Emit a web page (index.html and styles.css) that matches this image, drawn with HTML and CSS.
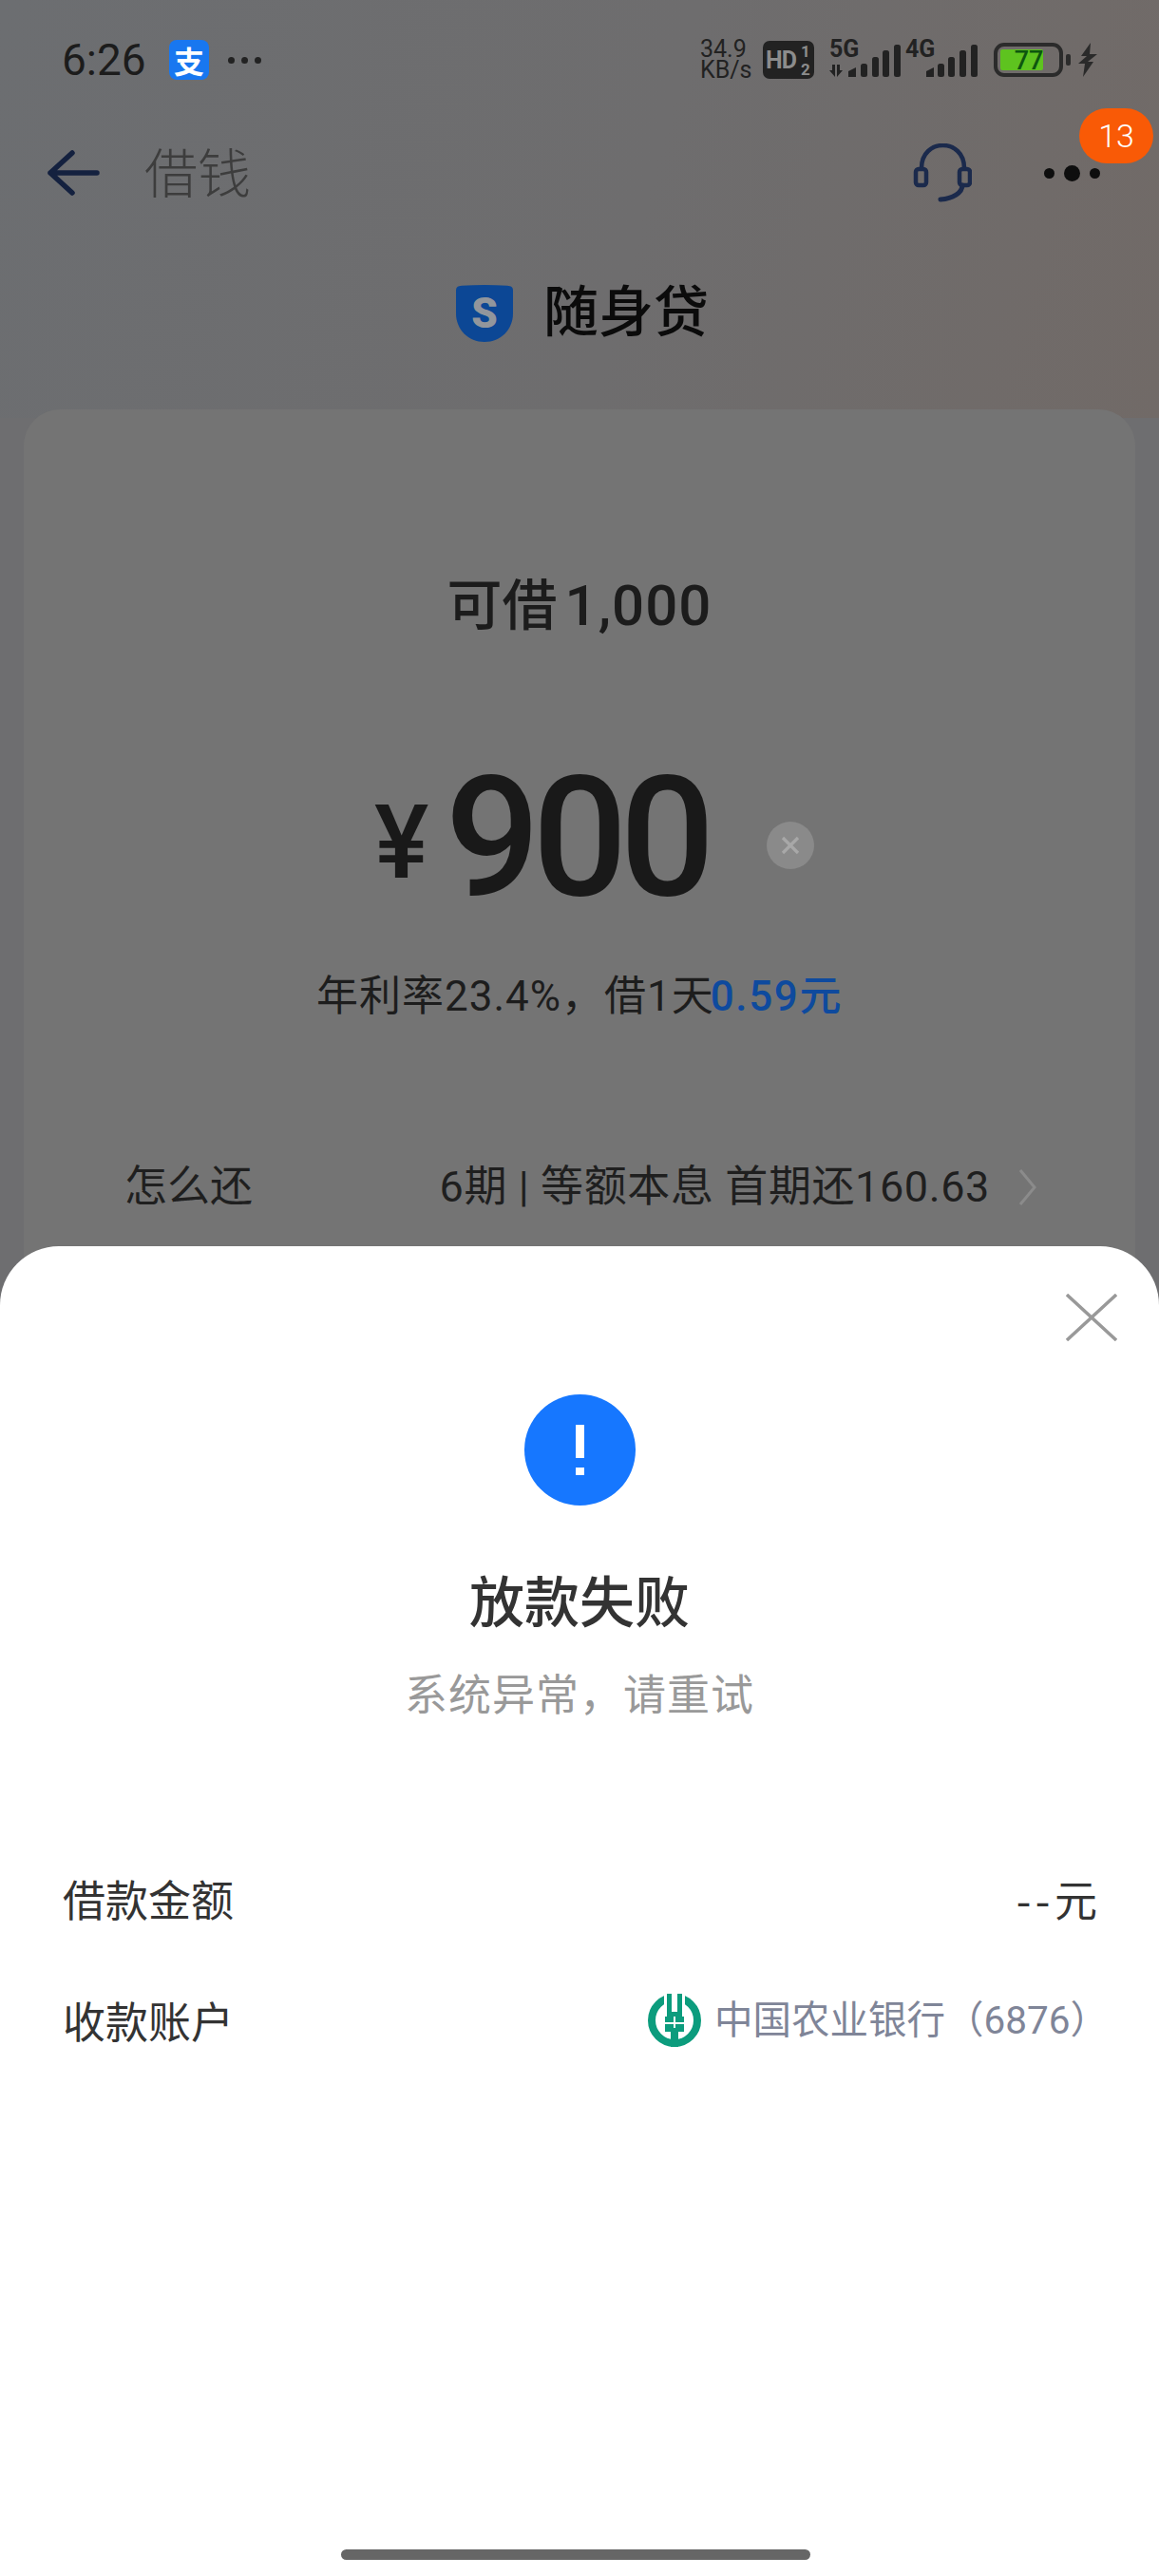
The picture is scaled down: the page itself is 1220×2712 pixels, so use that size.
FILE: index.html
```html
<!DOCTYPE html>
<html lang="zh-CN">
<head>
<meta charset="utf-8">
<title>借钱</title>
<link rel="stylesheet" href="styles.css">
</head>
<body>
<div class="page">
  <header class="status">
    <div class="status-left">
      <span class="time">6:26</span>
      <span class="alipay">支</span>
      <span class="more"><i></i><i></i><i></i></span>
    </div>
    <div class="status-right">
      <span class="net"><span class="net-line">34.9</span><span class="net-line">KB/s</span></span>
      <svg class="hd" width="54" height="40" viewBox="0 0 54 40">
        <rect width="54" height="40" rx="7" fill="#222"/>
        <text x="3" y="29" class="hd-t">HD</text>
        <text x="40" y="17" class="hd-f">1</text>
        <text x="40" y="36" class="hd-f">2</text>
      </svg>
      <svg class="sig sig-5g" width="77" height="38" viewBox="0 0 77 38" fill="#222">
        <text x="1" y="16" class="sig-t">5G</text>
        <path d="M7 24v13l-6-7h3v-6zM9 24h3v6h3l-6 7z" transform="rotate(0 8 30)"/>
        <path d="M21 37v-6l8-4v10z"/>
        <rect x="34" y="23" width="7" height="14" rx="2.5"/>
        <rect x="46" y="16" width="7" height="21" rx="2.5"/>
        <rect x="57" y="9" width="7" height="28" rx="2.5"/>
        <rect x="69" y="3" width="7" height="34" rx="2.5"/>
      </svg>
      <svg class="sig sig-4g" width="75" height="38" viewBox="0 0 75 38" fill="#222">
        <text x="-1" y="16" class="sig-t">4G</text>
        <path d="M21 37v-6l8-4v10z"/>
        <rect x="33" y="23" width="7" height="14" rx="2.5"/>
        <rect x="44" y="16" width="7" height="21" rx="2.5"/>
        <rect x="56" y="9" width="7" height="28" rx="2.5"/>
        <rect x="68" y="3" width="7" height="34" rx="2.5"/>
      </svg>
      <svg class="battery" width="81" height="36" viewBox="0 0 81 36">
        <rect x="2" y="2" width="69" height="32" rx="9" fill="none" stroke="#2b2b2b" stroke-width="4"/>
        <rect x="7" y="7" width="45" height="22" rx="2" fill="#5ec31f"/>
        <text x="37" y="28" class="bat-t" text-anchor="middle">77</text>
        <rect x="76" y="12" width="5" height="12" rx="2" fill="#2b2b2b"/>
      </svg>
      <svg class="bolt" width="20" height="36" viewBox="0 0 20 36">
        <path d="M13 0 3 14h6L0 22h7l-2 14L16 20h-6l10-8h-8z" fill="#2a2a2a"/>
      </svg>
    </div>
  </header>

  <nav class="nav">
    <svg class="back" width="56" height="48" viewBox="0 0 56 48">
      <path d="M53 24H4M27 3 4 24l23 21" fill="none" stroke="#14213f" stroke-width="5.5" stroke-linecap="round" stroke-linejoin="round"/>
    </svg>
    <span class="nav-title">借钱</span>
    <svg class="headset" width="62" height="62" viewBox="0 0 62 62" fill="none" stroke="#1b2a4c" stroke-width="4.5" stroke-linecap="round">
      <path d="M9 26C9 -6 54 -6 54 26"/>
      <rect x="3" y="27" width="11" height="17" rx="3"/>
      <rect x="49" y="27" width="11" height="17" rx="3"/>
      <path d="M52 44c0 8-10 14-23 15" stroke-width="5"/>
    </svg>
    <span class="kebab"><i></i><i class="big"></i><i></i></span>
    <span class="badge">13</span>
  </nav>

  <div class="brand">
    <svg class="shield" width="60" height="60" viewBox="0 0 60 60">
      <path d="M0 6C0 2 2 1 6 .7 22-.2 38-.2 54 .7 58 1 60 2 60 6v24C60 47 47 60 30 60S0 47 0 30z" fill="#0c4795"/>
      <text x="30" y="45" text-anchor="middle" class="shield-s">S</text>
    </svg>
    <span class="brand-name">随身贷</span>
  </div>

  <main class="card">
    <div class="limit">可借<span class="limit-num">1,000</span></div>
    <div class="amount">
      <span class="yen">¥</span>
      <span class="value">900</span>
      <span class="clear">
        <svg width="22" height="22" viewBox="0 0 22 22"><path d="M3 3l16 16M19 3 3 19" stroke="#a8a8a8" stroke-width="3.2"/></svg>
      </span>
    </div>
    <div class="rate">年利率23.4%，借1天<span class="rate-hi">0.59元</span></div>
    <div class="repay">
      <span>怎么还</span>
      <span class="repay-val"><span>6期 | 等额本息 首期还160.63</span><svg class="chev" width="20" height="40" viewBox="0 0 20 40"><path d="M2 2l15 18L2 38" fill="none" stroke="#8b8b8b" stroke-width="3"/></svg></span>
    </div>
  </main>

  <section class="sheet">
    <div class="close-row">
      <svg width="54" height="50" viewBox="0 0 54 50"><path d="M1 1l52 48M53 1 1 49" stroke="#999" stroke-width="3.4"/></svg>
    </div>
    <div class="alert"><span class="bang"></span><span class="bang-dot"></span></div>
    <h1 class="fail">放款失败</h1>
    <p class="reason">系统异常，请重试</p>
    <div class="line first">
      <span>借款金额</span>
      <span><span class="dash">--</span>元</span>
    </div>
    <div class="line">
      <span>收款账户</span>
      <span class="bank">
        <svg width="56" height="56" viewBox="0 0 56 56">
          <circle cx="28" cy="28" r="24" fill="none" stroke="#0c9c7d" stroke-width="8"/>
          <path d="M17 0h22v24H17z" fill="#fff"/>
          <path d="M20 0h5v19h6V0h5v24H20z" fill="#0c9c7d"/>
          <path d="M18 24h20v16h-6v16h-8V40h-6z" fill="#0c9c7d"/>
          <path d="M18 31h20" stroke="#fff" stroke-width="2"/>
          <path d="M28 24v12" stroke="#fff" stroke-width="2"/>
        </svg>
        <span class="bank-name">中国农业银行（6876）</span>
      </span>
    </div>
    <div class="home-bar"></div>
  </section>
</div>
</body>
</html>
```
FILE: styles.css
```css
* { box-sizing: border-box; }
html, body { margin: 0; padding: 0; }
body { font-family: Roboto, "Noto Sans CJK SC", sans-serif; }
.page {
  position: relative;
  width: 1220px;
  height: 2712px;
  overflow: hidden;
  background: linear-gradient(105deg, #6c6e71 0%, #6e6d6e 55%, #716a67 100%) top / 100% 440px no-repeat, #6e6e70;
  color: #1c1c1c;
}
.status {
  height: 126px;
  padding: 0 65px;
  display: flex;
  align-items: center;
  justify-content: space-between;
}
.status-left { display: flex; align-items: center; }
.time { font-size: 46px; font-weight: 400; line-height: 1; width: 113px; color: #1c1c1c; }
.alipay {
  width: 42px;
  height: 42px;
  border-radius: 8px;
  background: #1877f0;
  color: #fff;
  font: 700 32px/42px "Noto Sans CJK SC", sans-serif;
  text-align: center;
}
.more { display: flex; gap: 7px; margin-left: 20px; }
.more i { width: 7px; height: 7px; border-radius: 50%; background: #222; }
.status-right { display: flex; align-items: center; }
.net { display: flex; flex-direction: column; font-size: 25px; color: #222; width: 66px; }
.net-line { line-height: 22px; height: 22px; }
.hd { display: block; margin-right: 15px; }
.hd-t { font: 700 25px Roboto, sans-serif; fill: #8c8c8c; letter-spacing: -1px; }
.hd-f { font: 700 17px Roboto, sans-serif; fill: #8c8c8c; }
.sig { display: block; overflow: visible; }
.sig-5g { margin-right: 5px; }
.sig-4g { margin-right: 17px; }
.sig-t { font: 700 25px Roboto, sans-serif; fill: #222; }
.battery { display: block; margin-right: 8px; }
.bat-t { font: 500 27px Roboto, sans-serif; fill: #0d560f; }
.bolt { display: block; }

.nav { position: relative; height: 112px; display: flex; align-items: center; padding: 0 62px 0 49px; }
.back { display: block; margin-right: 47px; }
.nav-title { font: 300 56px/1 "Noto Sans CJK SC", sans-serif; color: #3d3d3d; flex: 1; margin-bottom: 6px; }
.headset { display: block; margin-right: 76px; }
.kebab { display: flex; align-items: center; gap: 10px; }
.kebab i { width: 11px; height: 11px; border-radius: 50%; background: #0e0e0e; }
.kebab .big { width: 17px; height: 17px; }
.badge {
  position: absolute;
  left: 1136px;
  top: -12px;
  width: 78px;
  height: 58px;
  border-radius: 29px;
  background: #f95a06;
  color: #fff;
  font-size: 34px;
  font-weight: 300;
  line-height: 58px;
  text-align: center;
}

.brand { margin-top: 62px; height: 60px; display: flex; align-items: center; justify-content: center; gap: 32px; padding-left: 6px; }
.shield { display: block; }
.shield-s { font: 900 44px Roboto, sans-serif; fill: #92969c; }
.brand-name { font: 500 58px/60px "Noto Sans CJK SC", sans-serif; color: #0b0b0b; margin-bottom: 12px; }

.card {
  margin: 71px 25px 0;
  height: 1000px;
  background: #747474;
  border-radius: 38px;
  padding-top: 172px;
}
.limit { text-align: center; font: 500 58px/60px "Noto Sans CJK SC", sans-serif; color: #1c1c1c; }
.limit-num { font-family: Roboto, sans-serif; font-size: 60px; letter-spacing: 1px; margin-left: 8px; }
.amount { position: relative; margin-top: 134px; height: 160px; display: flex; align-items: center; padding-left: 369px; }
.yen { font: 500 108px/160px Roboto, sans-serif; color: #191919; margin-right: 17px; position: relative; top: 5px; }
.value { font: 500 176px/160px Roboto, sans-serif; color: #191919; letter-spacing: -8px; }
.clear {
  position: absolute;
  left: 782px;
  top: 63px;
  width: 50px;
  height: 50px;
  border-radius: 50%;
  background: #8a8a8a;
  display: flex;
  align-items: center;
  justify-content: center;
}
.clear svg { display: block; }
.rate { margin-top: 57px; text-align: center; font: 400 44px/60px Roboto, "Noto Sans CJK SC", sans-serif; color: #1d1d1d; letter-spacing: 1px; }
.rate-hi { color: #0e4a9e; font-weight: 500; letter-spacing: 1.6px; margin-left: -4px; }
.repay { margin-top: 141px; padding: 0 103px 0 106px; display: flex; justify-content: space-between; align-items: center; font: 400 45px/60px Roboto, "Noto Sans CJK SC", sans-serif; color: #1f1f1f; }
.repay-val { display: flex; align-items: center; gap: 30px; letter-spacing: .6px; white-space: pre; }
.chev { display: block; }

.sheet {
  position: absolute;
  left: 0;
  right: 0;
  top: 1312px;
  bottom: 0;
  background: #fff;
  border-radius: 62px 62px 0 0;
  display: flex;
  flex-direction: column;
  align-items: center;
  color: #333;
}
.close-row { align-self: flex-end; padding: 50px 44px 0 0; height: 100px; }
.close-row svg { display: block; }
.alert {
  margin-top: 56px;
  width: 117px;
  height: 117px;
  border-radius: 50%;
  background: #1677ff;
  display: flex;
  flex-direction: column;
  align-items: center;
  padding-top: 32px;
  gap: 10px;
}
.bang { width: 9px; height: 35px; background: #fff; }
.bang-dot { width: 9px; height: 8px; background: #fff; }
.fail { margin: 60px 0 0; font: 500 58px/76px "Noto Sans CJK SC", sans-serif; color: #333; }
.reason { margin: 31px 0 0; font: 400 45px/60px "Noto Sans CJK SC", sans-serif; color: #999; letter-spacing: 1px; }
.line {
  align-self: stretch;
  margin-top: 68px;
  height: 60px;
  padding: 0 65px 0 66px;
  display: flex;
  justify-content: space-between;
  align-items: center;
  font: 400 45px/60px "Noto Sans CJK SC", sans-serif;
  color: #333;
}
.line.first { margin-top: 157px; }
.dash { letter-spacing: 4.5px; }
.bank { display: flex; align-items: center; gap: 14px; margin-right: -12px; }
.bank svg { display: block; }
.bank-name { font: 400 40.5px/60px Roboto, "Noto Sans CJK SC", sans-serif; color: #7f8598; }
.home-bar {
  position: absolute;
  left: 359px;
  bottom: 17px;
  width: 494px;
  height: 11px;
  border-radius: 6px;
  background: #666;
}
```
